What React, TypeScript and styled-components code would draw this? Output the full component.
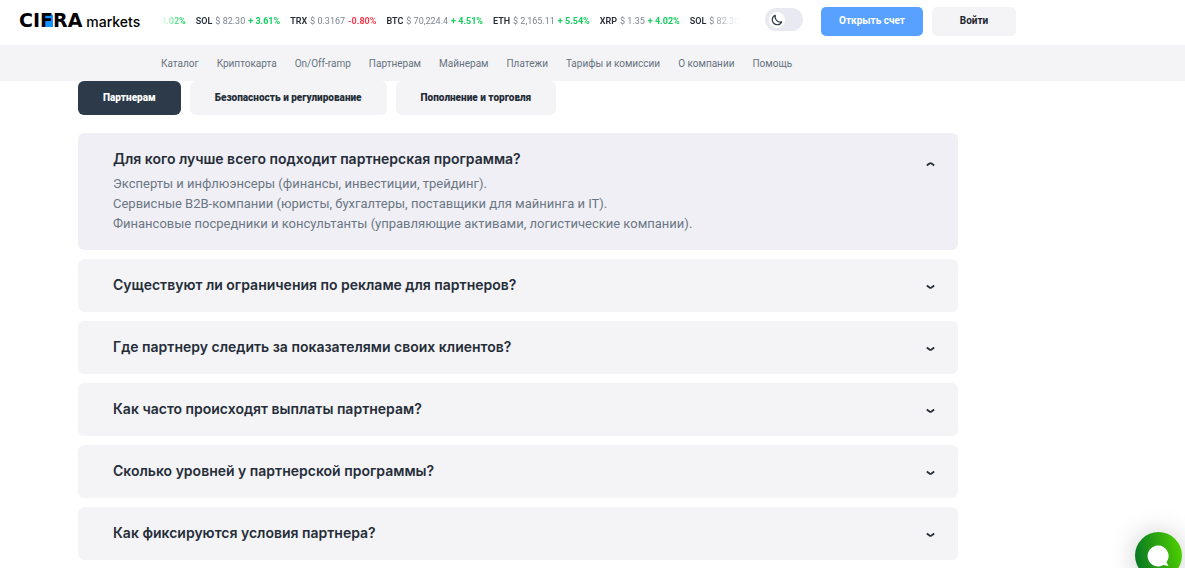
import React, { useState } from "react";
import styled, { createGlobalStyle } from "styled-components";

const GlobalStyle = createGlobalStyle`
  *, *::before, *::after { box-sizing: border-box; }
  body {
    margin: 0;
    background: #fff;
    color: #252d38;
    font-family: Roboto, "Liberation Sans", sans-serif;
    font-size: 10px;
    overflow-x: hidden;
  }
  button { font-family: inherit; cursor: pointer; }
`;

const TopBar = styled.header`
  display: flex;
  align-items: center;
  height: 45px;
  padding: 0 19px 2px;
`;

const Logo = styled.a`
  display: flex;
  align-items: baseline;
  gap: 4px;
  flex: none;
  width: 142px;
  margin-bottom: 2px;
  color: #000;
  text-decoration: none;
  line-height: 20px;
`;

const LogoMark = styled.span`
  font-family: "DejaVu Sans", sans-serif;
  font-size: 19px;
  font-weight: 700;
`;

const LogoAccent = styled.span`
  background: linear-gradient(#1596ff, #1596ff) right 0 bottom 4px / 10px 12px no-repeat;
`;

const LogoWord = styled.span`
  font-family: Inter, sans-serif;
  font-size: 14px;
  font-weight: 500;
`;

const Ticker = styled.div`
  flex: 0 1 578px;
  min-width: 0;
  margin-bottom: 2px;
  overflow: hidden;
  mask-image: linear-gradient(90deg, transparent, #000 24px, #000 calc(100% - 28px), transparent);
`;

const TickerTrack = styled.ul`
  display: flex;
  gap: 10px;
  margin: 0;
  padding: 0;
  list-style: none;
  white-space: nowrap;
`;

const Quote = styled.li`
  display: flex;
  flex: none;
  gap: 3px;
  font-size: 9px;
  line-height: 12px;
`;

const Pair = styled.span`
  font-weight: 600;
`;

const Price = styled.span`
  color: #7b8590;
`;

const Change = styled.span<{ $down?: boolean }>`
  color: ${(p) => (p.$down ? "#fb3b4e" : "#12cf5c")};
  font-weight: 700;
`;

const Actions = styled.div`
  display: flex;
  align-items: center;
  gap: 9px;
  flex: none;
  margin-left: 26px;
`;

const ThemeSwitch = styled.label`
  position: relative;
  display: flex;
  align-items: center;
  width: 38px;
  height: 23px;
  margin: 0 9px 4px 0;
  padding: 0 4px;
  border-radius: 12px;
  background: #e9e9f1;
  cursor: pointer;

  input {
    position: absolute;
    inset: 0;
    width: 100%;
    height: 100%;
    margin: 0;
    opacity: 0;
    cursor: pointer;
  }
  input:checked + span { margin-left: auto; }
`;

const Knob = styled.span`
  display: grid;
  place-items: center;
  width: 16px;
  height: 16px;
  border-radius: 50%;
  background: #fff;
`;

const ActionButton = styled.button<{ $primary?: boolean }>`
  height: 29px;
  min-width: ${(p) => (p.$primary ? 102 : 84)}px;
  padding: 0 12px 2px;
  border: 0;
  border-radius: 5px;
  background: ${(p) => (p.$primary ? "#58a1ff" : "#f4f4f7")};
  color: ${(p) => (p.$primary ? "#fff" : "#1d2530")};
  font-size: 10px;
  font-weight: 700;
`;

const Nav = styled.nav`
  display: flex;
  align-items: center;
  gap: 18px;
  height: 36px;
  padding: 2px 161px 0;
  background: #f4f4f6;
  white-space: nowrap;
`;

const NavLink = styled.a`
  color: #66727e;
  font-size: 10px;
  line-height: 14px;
  text-decoration: none;
`;

const Content = styled.main`
  max-width: 958px;
  padding: 0 0 9px 78px;
`;

const Tabs = styled.div`
  display: flex;
  gap: 9px;
  margin-bottom: 18px;
`;

const Tab = styled.button<{ $active: boolean }>`
  height: 34px;
  padding: 0 25px 2px;
  border: 0;
  border-radius: 6px;
  background: ${(p) => (p.$active ? "#2c3a49" : "#f4f4f7")};
  color: ${(p) => (p.$active ? "#fff" : "#252d38")};
  font-size: 10px;
  font-weight: 900;
`;

const Accordion = styled.div`
  display: flex;
  flex-direction: column;
  gap: 9px;
`;

const Item = styled.section<{ $open: boolean }>`
  padding-bottom: ${(p) => (p.$open ? 16 : 0)}px;
  border-radius: 6px;
  background: ${(p) => (p.$open ? "#f0eff5" : "#f4f4f7")};
`;

const ItemTitle = styled.h3`
  margin: 0;
`;

const ItemButton = styled.button<{ $open: boolean }>`
  display: flex;
  align-items: center;
  justify-content: space-between;
  width: 100%;
  height: ${(p) => (p.$open ? 41 : 53)}px;
  padding: ${(p) => (p.$open ? "10px 23px 0 35px" : "0 23px 2px 35px")};
  border: 0;
  background: none;
  color: #252d38;
  font-family: Inter, sans-serif;
  font-size: 14px;
  font-weight: 600;
  line-height: 20px;
  text-align: left;
`;

const Answer = styled.p`
  margin: 0;
  padding: 0 35px;
  color: #6b7784;
  font-size: 13px;
  line-height: 20px;
`;

const Chevron = styled.svg<{ $open: boolean }>`
  flex: none;
  margin-top: ${(p) => (p.$open ? 10 : 4)}px;
  transform: ${(p) => (p.$open ? "rotate(180deg)" : "none")};
`;

const ChatButton = styled.button`
  position: fixed;
  right: 3px;
  bottom: -11px;
  display: grid;
  place-items: center;
  width: 47px;
  height: 47px;
  padding: 0;
  border: 0;
  border-radius: 50%;
  background: linear-gradient(80deg, #0a7a22 10%, #4fd000 95%);
  box-shadow: 0 2px 28px rgba(0, 0, 0, 0.22);
`;

type Rate = { pair?: string; price?: string; change?: string; down?: boolean };

const rates: Rate[] = [
  { change: "4.02%" },
  { pair: "SOL", price: "$ 82.30", change: "+ 3.61%" },
  { pair: "TRX", price: "$ 0.3167", change: "-0.80%", down: true },
  { pair: "BTC", price: "$ 70,224.4", change: "+ 4.51%" },
  { pair: "ETH", price: "$ 2,165.11", change: "+ 5.54%" },
  { pair: "XRP", price: "$ 1.35", change: "+ 4.02%" },
  { pair: "SOL", price: "$ 82.30" },
];

const links = [
  "Каталог",
  "Криптокарта",
  "On/Off-ramp",
  "Партнерам",
  "Майнерам",
  "Платежи",
  "Тарифы и комиссии",
  "О компании",
  "Помощь",
];

const tabs = ["Партнерам", "Безопасность и регулирование", "Пополнение и торговля"];

const questions: { title: string; answer: string[] }[] = [
  {
    title: "Для кого лучше всего подходит партнерская программа?",
    answer: [
      "Эксперты и инфлюэнсеры (финансы, инвестиции, трейдинг).",
      "Сервисные B2B-компании (юристы, бухгалтеры, поставщики для майнинга и IT).",
      "Финансовые посредники и консультанты (управляющие активами, логистические компании).",
    ],
  },
  { title: "Существуют ли ограничения по рекламе для партнеров?", answer: [] },
  { title: "Где партнеру следить за показателями своих клиентов?", answer: [] },
  { title: "Как часто происходят выплаты партнерам?", answer: [] },
  { title: "Сколько уровней у партнерской программы?", answer: [] },
  { title: "Как фиксируются условия партнера?", answer: [] },
];

export default function App() {
  const [tab, setTab] = useState(0);
  const [open, setOpen] = useState(0);

  return (
    <>
      <GlobalStyle />
      <TopBar>
        <Logo href="#">
          <LogoMark>
            CI<LogoAccent>F</LogoAccent>RA
          </LogoMark>
          <LogoWord>markets</LogoWord>
        </Logo>
        <Ticker>
          <TickerTrack>
            {rates.map((r, i) => (
              <Quote key={i}>
                {r.pair && <Pair>{r.pair}</Pair>}
                {r.price && <Price>{r.price}</Price>}
                {r.change && <Change $down={r.down}>{r.change}</Change>}
              </Quote>
            ))}
          </TickerTrack>
        </Ticker>
        <Actions>
          <ThemeSwitch>
            <input type="checkbox" aria-label="Тёмная тема" />
            <Knob>
              <svg width="12" height="12" viewBox="0 0 24 24" fill="none" stroke="#2c3a49" strokeWidth="2.4" strokeLinejoin="round">
                <path d="M8.5 2.5C5 4 2.500 7.500 2.500 11.500C2.500 17 7 21.500 12.500 21.500C16.500 21.500 20 19 21.500 15.500C14 18 6.500 11 8.500 2.500Z" />
              </svg>
            </Knob>
          </ThemeSwitch>
          <ActionButton $primary>Открыть счет</ActionButton>
          <ActionButton>Войти</ActionButton>
        </Actions>
      </TopBar>
      <Nav>
        {links.map((l) => (
          <NavLink key={l} href="#">
            {l}
          </NavLink>
        ))}
      </Nav>
      <Content>
        <Tabs role="tablist">
          {tabs.map((t, i) => (
            <Tab key={t} role="tab" aria-selected={i === tab} $active={i === tab} onClick={() => setTab(i)}>
              {t}
            </Tab>
          ))}
        </Tabs>
        <Accordion>
          {questions.map((q, i) => {
            const isOpen = i === open;
            return (
              <Item key={q.title} $open={isOpen}>
                <ItemTitle>
                  <ItemButton $open={isOpen} aria-expanded={isOpen} onClick={() => setOpen(isOpen ? -1 : i)}>
                    {q.title}
                    <Chevron $open={isOpen} width="9" height="6" viewBox="0 0 9 6" fill="none" stroke="#252d38" strokeWidth="1.8">
                      <path d="M0.800 1.500L3.500 3.500Q4.500 4.200 5.500 3.500L8.200 1.500" />
                    </Chevron>
                  </ItemButton>
                </ItemTitle>
                {isOpen && q.answer.map((line) => <Answer key={line}>{line}</Answer>)}
              </Item>
            );
          })}
        </Accordion>
      </Content>
      <ChatButton aria-label="Чат">
        <svg width="24" height="24" viewBox="0 0 24 24" fill="#fff">
          <path d="M11 1.500A10.500 10.500 0 1 0 16.500 21L21.500 22L19.500 18.200A10.500 10.500 0 0 0 11 1.500Z" />
        </svg>
      </ChatButton>
    </>
  );
}
